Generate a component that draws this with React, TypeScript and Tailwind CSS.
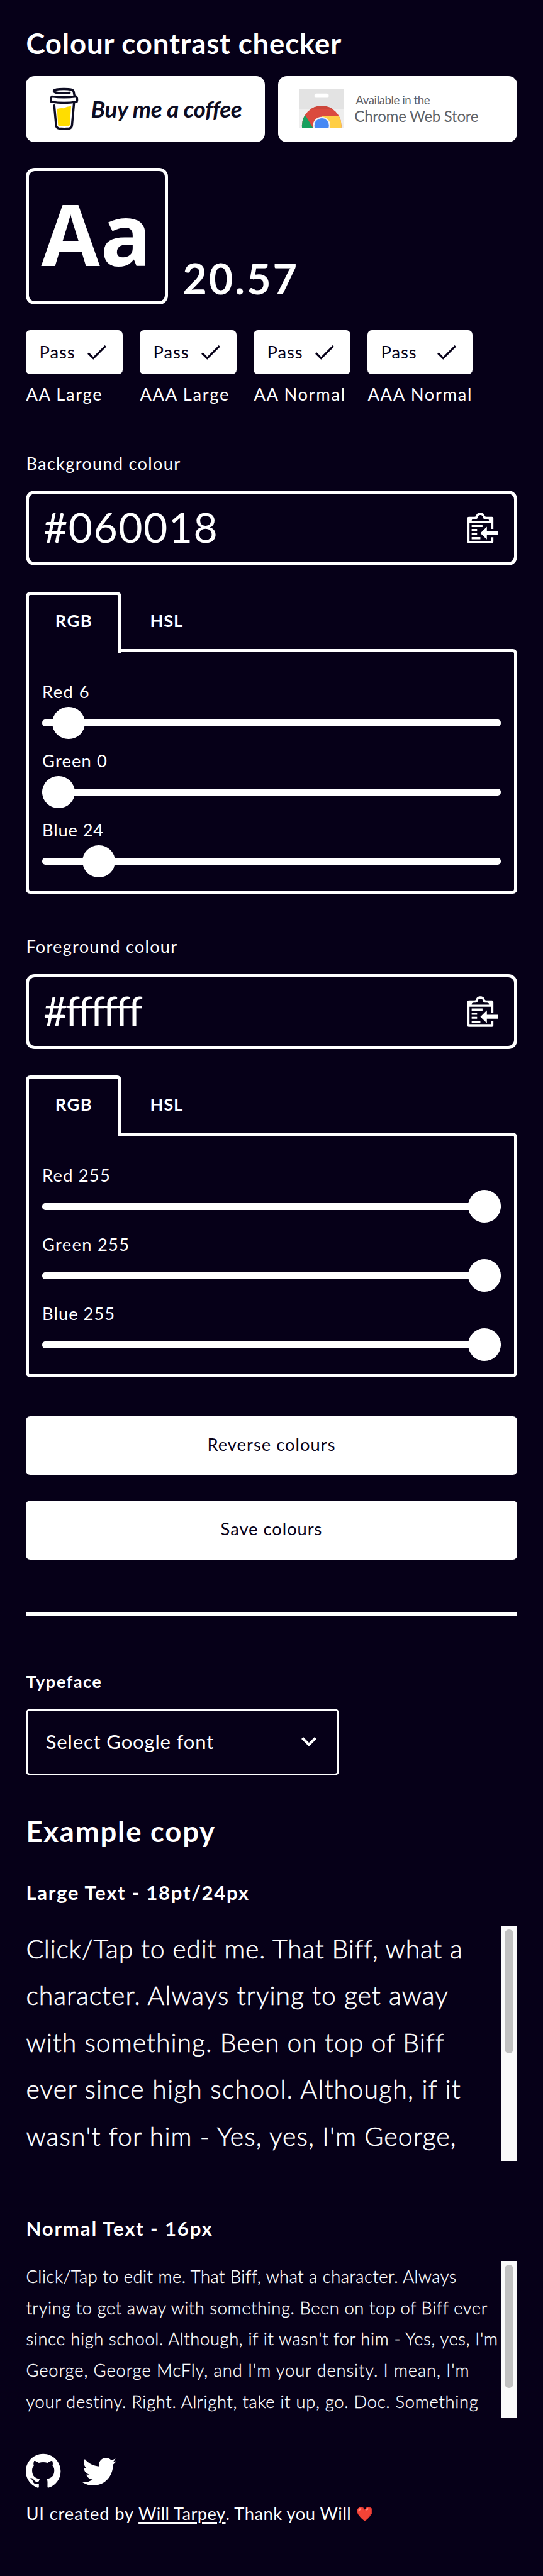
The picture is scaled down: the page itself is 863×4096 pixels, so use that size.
import { FaTwitter } from "react-icons/fa";
import { SiGithub } from "react-icons/si";

function CoffeeCup() {
  return (
    <svg viewBox="150 90 170 245" className="h-[70.5px] w-[49px] shrink-0" fill="none" stroke="#0d0c22" strokeWidth="12" strokeLinecap="round" strokeLinejoin="round">
      <path d="M197 212Q216 207 235 209Q252 198 275 198L268 298Q267 309 256 309H213Q204 309 203 299Z" fill="#ffdd00" stroke="none" />
      <path d="M267 123C240 127 190 127 180 116C175 105 205 102 235 102C270 102 286 105 289 116L294 142" />
      <path d="M168 144Q159 160 166 173Q236 184 306 173Q312 158 303 144Q236 153 168 144Z" />
      <path d="M182 193L192 303Q194 318 208 320Q238 323 265 320Q278 318 280 302L291 180" />
    </svg>
  );
}

function ChromeBag() {
  return (
    <svg viewBox="150 103 252 217" className="h-[62.5px] w-[72.5px] shrink-0">
      <defs>
        <clipPath id="bag">
          <path d="M150 103H402V304Q402 320 386 320H166Q150 320 150 304Z" />
        </clipPath>
        <clipPath id="wheel">
          <circle cx="276" cy="303" r="109" />
        </clipPath>
      </defs>
      <g clipPath="url(#bag)">
        <rect x="150" y="103" width="252" height="217" fill="#eeeeee" />
        <rect x="150" y="103" width="252" height="109" fill="#e3e3e3" />
        <rect x="236" y="126" width="79" height="24" rx="11" fill="#fff" />
        <g clipPath="url(#wheel)">
          <rect x="160" y="190" width="230" height="140" fill="#db4a3e" />
          <rect x="160" y="190" width="230" height="22" fill="#cc463b" />
          <path d="M185 245L236 330H160V245Z" fill="#17a05e" />
          <path d="M276 252H400V330H276Z" fill="#ffce44" />
        </g>
        <circle cx="276" cy="303" r="48" fill="#f1f1f1" />
        <circle cx="276" cy="303" r="40" fill="#4688f4" />
      </g>
    </svg>
  );
}

function PasteIcon() {
  return (
    <svg viewBox="54 40 180 180" className="size-[51.8px] shrink-0" fill="#fff">
      <path
        fillRule="evenodd"
        d="M68 67H100Q107 67 108 62C110 50 120 44 132 44S154 50 156 62Q157 67 164 67H196Q204 67 204 75V134H192V102H72V201H192V180H204V205Q204 213 196 213H68Q60 213 60 205V75Q60 67 68 67ZM84 90H180Q180 79 168 79H158Q148 79 146 70Q145 57 132 57T118 70Q116 79 106 79H96Q84 79 84 90Z"
      />
      <path d="M84 111H144V123H84ZM84 134H114V146H84ZM84 157H114V168H84ZM84 179H132V191H84ZM132 157L168 122V146H228V168H168V192Z" />
    </svg>
  );
}

function Badge({ label, box, tracking }: { label: string; box: string; tracking: string }) {
  return (
    <div className={box}>
      <div className="flex h-[69.5px] items-center justify-between rounded-[7px] bg-white pr-[25.5px] pl-[21px] text-[#060018]">
        <span className="tracking-[1.03px]">Pass</span>
        <svg viewBox="0 0 30 23" className="h-[23px] w-[30px]" fill="none" stroke="#060018" strokeWidth="3.2">
          <path d="M1.2 12.5L9.3 20.6L28.8 1.2" />
        </svg>
      </div>
      <p className={`mt-[14px] whitespace-nowrap ${tracking}`}>{label}</p>
    </div>
  );
}

type Channel = { name: string; value: number; tracking: string };

function ColourControl({ title, titleClass, hex, hexClass, channels }: { title: string; titleClass: string; hex: string; hexClass: string; channels: Channel[] }) {
  return (
    <section>
      <p className={titleClass}>{title}</p>
      <div className="mt-[25.6px] flex h-[119px] items-center justify-between rounded-[14px] border-[5px] border-white pr-[24px] pl-[22.5px]">
        <span className={`-mt-[4px] text-[66px] leading-[80px] ${hexClass}`}>{hex}</span>
        <PasteIcon />
      </div>
      <div className="mt-[41.5px] flex h-[91.4px]">
        <div className="z-10 h-[97px] w-[151.2px] shrink-0 rounded-t-[7px] border-[5px] border-b-0 border-white bg-[#060018] pt-[23.7px] pl-[41.4px] font-bold tracking-[1.44px]">RGB</div>
        <div className="pt-[28.7px] pl-[46px] font-bold tracking-[0.72px]">HSL</div>
      </div>
      <div className="flex h-[389.3px] flex-col gap-[16.7px] rounded-[7px] rounded-tl-none border-[5px] border-white px-[20.7px] pt-[45px]">
        {channels.map((c) => (
          <div key={c.name}>
            <p className={c.tracking}>
              {c.name} {c.value}
            </p>
            <div className="relative mt-[5.5px] flex h-[51.8px] items-center">
              <div className="h-[10.4px] w-full rounded-[5px] bg-white" />
              <div className="absolute top-0 size-[51.8px] rounded-full bg-white" style={{ left: `calc((100% - 51.8px) * ${c.value / 255})` }} />
            </div>
          </div>
        ))}
      </div>
    </section>
  );
}

function Copy({ lines, area, text, thumb }: { lines: [string, string][]; area: string; text: string; thumb: string }) {
  return (
    <div className={`flex justify-between overflow-hidden ${area}`}>
      <div className={`w-[754.3px] font-light whitespace-nowrap ${text}`}>
        {lines.map(([line, tracking]) => (
          <p key={line} className={tracking}>
            {line}
          </p>
        ))}
      </div>
      <div className="w-[26px] shrink-0 border-l border-[#e8e8e8] bg-[#fafafa] pt-[5.2px] pl-[5.7px]">
        <div className={`w-[13.8px] rounded-full bg-[#c1c1c1] ${thumb}`} />
      </div>
    </div>
  );
}

export default function App() {
  return (
    <main className="h-[4096px] w-[863px] overflow-hidden bg-[#060018] px-[41.4px] pt-[40.5px] font-['Lato',sans-serif] text-[27.3px] leading-[36px] text-white">
      <h1 className="text-[45.5px] leading-[56px] font-bold tracking-[0.86px]">Colour contrast checker</h1>

      <div className="mt-[24px] grid grid-cols-2 gap-[20.7px]">
        <a className="flex h-[105px] items-center rounded-[14px] bg-white pl-[36px] text-[#0d0c22]">
          <CoffeeCup />
          <span className="ml-[18px] text-[37px] leading-[44px] font-bold whitespace-nowrap italic tracking-[-0.4px]">Buy me a coffee</span>
        </a>
        <a className="flex h-[105px] items-center rounded-[14px] bg-white pl-[33px] text-[#5f6368]">
          <ChromeBag />
          <span className="ml-[16px] flex flex-col whitespace-nowrap">
            <span className="ml-[2px] text-[18.7px] leading-[24px] tracking-[-0.45px]">Available in the</span>
            <span className="text-[24.1px] leading-[28px] tracking-[-0.3px]">Chrome Web Store</span>
          </span>
        </a>
      </div>

      <div className="mt-[41px] flex items-end">
        <div className="h-[217.6px] w-[226.1px] rounded-[14px] border-[5px] border-white pl-[19px] font-['Open_Sans',sans-serif] text-[135px] leading-[198px] font-bold tracking-[1px]">Aa</div>
        <div className="mb-[8.8px] ml-[22.7px] text-[66.6px] leading-[66px] font-bold tracking-[2.92px]">20.57</div>
      </div>

      <div className="mt-[41.4px] flex gap-[27.5px]">
        <Badge label="AA Large" box="w-[153.5px]" tracking="tracking-[1.65px]" />
        <Badge label="AAA Large" box="w-[153.5px]" tracking="tracking-[1.73px]" />
        <Badge label="AA Normal" box="w-[153.5px]" tracking="tracking-[1.68px]" />
        <Badge label="AAA Normal" box="w-[166.3px]" tracking="tracking-[1.7px]" />
      </div>

      <div className="mt-[73.7px]">
        <ColourControl
          title="Background colour"
          titleClass="tracking-[1.23px]"
          hex="#060018"
          hexClass="tracking-[1.48px]"
          channels={[
            { name: "Red", value: 6, tracking: "tracking-[1.41px]" },
            { name: "Green", value: 0, tracking: "tracking-[1.12px]" },
            { name: "Blue", value: 24, tracking: "tracking-[0.82px]" },
          ]}
        />
      </div>
      <div className="mt-[66px]">
        <ColourControl
          title="Foreground colour"
          titleClass="tracking-[1.2px]"
          hex="#ffffff"
          hexClass="tracking-[-3.2px]"
          channels={[
            { name: "Red", value: 255, tracking: "tracking-[1.21px]" },
            { name: "Green", value: 255, tracking: "tracking-[1.29px]" },
            { name: "Blue", value: 255, tracking: "tracking-[1.01px]" },
          ]}
        />
      </div>

      <div className="mt-[61.3px] flex flex-col gap-[41.6px] text-[#060018]">
        <button className="h-[93.2px] rounded-[7px] bg-white pb-[3px] tracking-[1.04px]">Reverse colours</button>
        <button className="h-[93.2px] rounded-[7px] bg-white pb-[3px] tracking-[0.98px]">Save colours</button>
      </div>

      <hr className="mt-[83px] h-[7px] border-0 bg-white" />

      <p className="mt-[86px] font-bold tracking-[1.44px]">Typeface</p>
      <div className="mt-[25.6px] flex h-[106px] w-[498px] items-center justify-between rounded-[7px] border-[3px] border-white pr-[33px] pb-[2px] pl-[28.4px]">
        <span className="text-[31px] tracking-[0.85px]">Select Google font</span>
        <svg viewBox="0 0 24 15" className="h-[15px] w-[24px]" fill="none" stroke="#fff" strokeWidth="4.2">
          <path d="M1.5 1.5L12 12L22.5 1.5" />
        </svg>
      </div>

      <h2 className="mt-[61.4px] text-[45.5px] leading-[56px] font-bold tracking-[1.75px]">Example copy</h2>
      <h3 className="mt-[48.5px] text-[31.2px] leading-[40px] font-bold tracking-[1.68px]">Large Text - 18pt/24px</h3>
      <Copy
        area="mt-[34px] h-[372.8px]"
        text="-mt-[1px] text-[41px] leading-[74.5px] [-webkit-text-stroke:0.6px_#fff]"
        thumb="h-[196.8px]"
        lines={[
          ["Click/Tap to edit me. That Biff, what a", "tracking-[0.75px]"],
          ["character. Always trying to get away", "tracking-[0.96px]"],
          ["with something. Been on top of Biff", "tracking-[0.97px]"],
          ["ever since high school. Although, if it", "tracking-[1.18px]"],
          ["wasn't for him - Yes, yes, I'm George,", "tracking-[1.06px]"],
        ]}
      />
      <h3 className="mt-[86.8px] text-[31.2px] leading-[40px] font-bold tracking-[1.79px]">Normal Text - 16px</h3>
      <Copy
        area="mt-[32.8px] h-[248.5px]"
        text="-mt-[0.5px] leading-[49.7px] [-webkit-text-stroke:0.35px_#fff]"
        thumb="h-[196.8px]"
        lines={[
          ["Click/Tap to edit me. That Biff, what a character. Always", "tracking-[0.53px]"],
          ["trying to get away with something. Been on top of Biff ever", "tracking-[0.62px]"],
          ["since high school. Although, if it wasn't for him - Yes, yes, I'm", "tracking-[0.66px]"],
          ["George, George McFly, and I'm your density. I mean, I'm", "tracking-[0.92px]"],
          ["your destiny. Right. Alright, take it up, go. Doc. Something", "tracking-[0.73px]"],
        ]}
      />

      <div className="mt-[55.6px] flex items-center gap-[34.5px]">
        <SiGithub className="size-[55.4px]" />
        <FaTwitter className="mt-[4px] size-[54px]" />
      </div>
      <p className="mt-[22px] flex items-center whitespace-pre">
        <span className="tracking-[0.86px]">UI created by </span>
        <a className="tracking-[0.43px] underline decoration-[3px] underline-offset-[3px]">Will Tarpey</a>
        <span className="tracking-[0.53px]">. Thank you Will </span>
        <span className="text-[22px]">❤️</span>
      </p>
    </main>
  );
}
